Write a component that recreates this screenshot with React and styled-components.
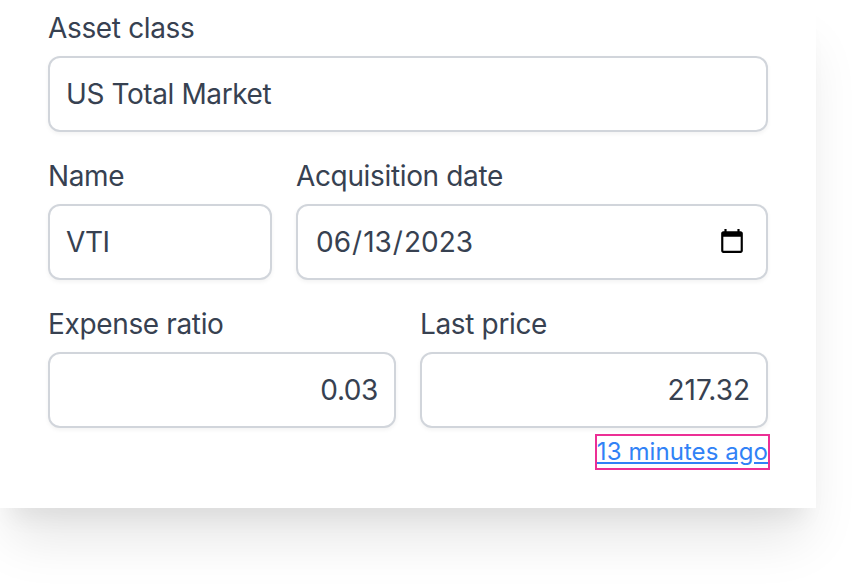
import React from 'react'
import styled, { createGlobalStyle } from 'styled-components'

const GlobalStyle = createGlobalStyle`
html, body {
  margin: 0;
  padding: 0;
  background: #fff;
  overflow: hidden;
  font-family: 'Inter', 'Liberation Sans', sans-serif;
}
* {
  box-sizing: border-box;
}
`

const Page = styled.div`
width: 852px;
height: 584px;
background: #fff;
overflow: hidden;
`

const Card = styled.form`
width: 816px;
height: 508px;
padding: 8px 48px 0;
background: #fff;
display: flex;
flex-direction: column;
gap: 24px;
box-shadow: 0 40px 50px -10px rgba(0, 0, 0, 0.1), 0 20px 20px -10px rgba(0, 0, 0, 0.05);
`

const Row = styled.div`
display: grid;
grid-template-columns: ${props => props.$columns || '1fr'};
column-gap: 24px;
`

const Field = styled.div`
display: flex;
flex-direction: column;
min-width: 0;
`

const Label = styled.label`
display: block;
font-size: 28px;
line-height: 40px;
font-weight: 400;
letter-spacing: -0.35px;
color: #374151;
margin-bottom: 8px;
`

const Input = styled.input`
display: block;
width: 100%;
height: 76px;
padding: 0 16px;
border: 2px solid #d1d5db;
border-radius: 12px;
background: #fff;
box-shadow: 0 2px 4px rgba(0, 0, 0, 0.05);
color: #374151;
font-family: inherit;
font-size: 28px;
letter-spacing: ${props => props.$tracking || '-0.4px'};
text-align: ${props => (props.$right ? 'right' : 'left')};
outline: none;
`

const DateInput = styled(Input)`
padding: 0 16px 0 17px;
letter-spacing: 0;

&::-webkit-calendar-picker-indicator {
  width: 28px;
  height: 28px;
  padding: 0;
  margin: 0 4px 0 0;
}
`

const Hint = styled.div`
display: flex;
justify-content: flex-end;
margin-top: 8px;
`

const Link = styled.a`
display: inline-block;
height: 32px;
font-size: 24px;
line-height: 32px;
letter-spacing: 0.07px;
color: #3182f6;
text-decoration: underline;
outline: 2px solid #ec2f95;
`

const App = () => {
    return (
        <Page>
            <GlobalStyle />
            <Card>
                <Row>
                    <Field>
                        <Label htmlFor="asset-class">Asset class</Label>
                        <Input id="asset-class" type="text" defaultValue="US Total Market" />
                    </Field>
                </Row>
                <Row $columns="224px 472px">
                    <Field>
                        <Label htmlFor="name">Name</Label>
                        <Input id="name" type="text" defaultValue="VTI" />
                    </Field>
                    <Field>
                        <Label htmlFor="acquired">Acquisition date</Label>
                        <DateInput id="acquired" type="date" defaultValue="2023-06-13" />
                    </Field>
                </Row>
                <Row $columns="1fr 1fr">
                    <Field>
                        <Label htmlFor="expense">Expense ratio</Label>
                        <Input id="expense" type="text" $right defaultValue="0.03" />
                    </Field>
                    <Field>
                        <Label htmlFor="price">Last price</Label>
                        <Input id="price" type="text" $right $tracking="0" defaultValue="217.32" />
                        <Hint>
                            <Link href="#">13 minutes ago</Link>
                        </Hint>
                    </Field>
                </Row>
            </Card>
        </Page>
    )
}

export default App
